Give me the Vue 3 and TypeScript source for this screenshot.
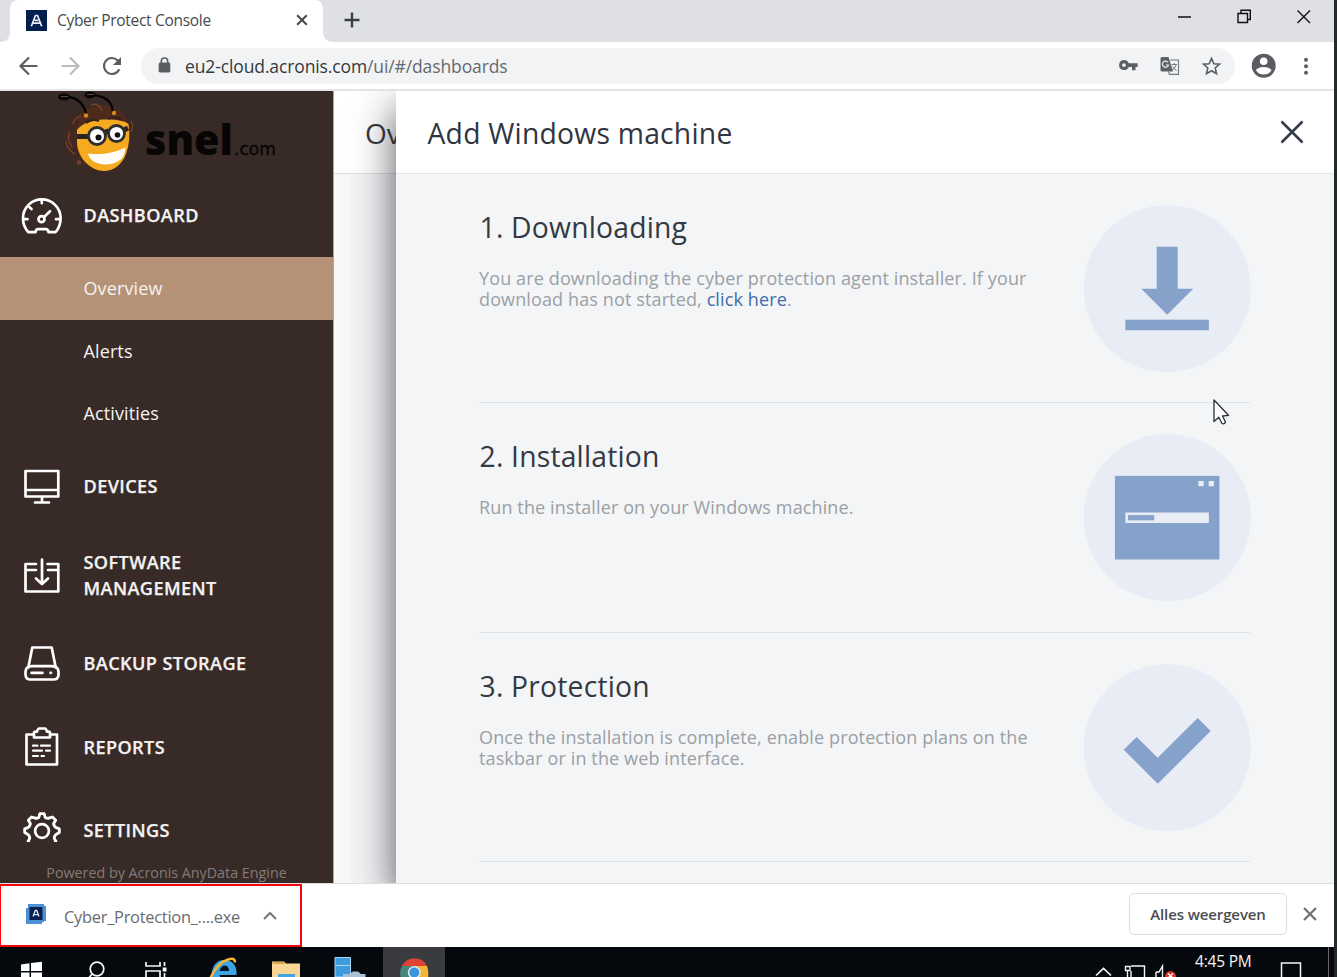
<script setup lang="ts">
interface NavItem {
  id: string
  label: string
  tall?: boolean
  children?: { label: string; active: boolean }[]
}

const navItems: NavItem[] = [
  {
    id: 'dashboard',
    label: 'DASHBOARD',
    children: [
      { label: 'Overview', active: true },
      { label: 'Alerts', active: false },
      { label: 'Activities', active: false },
    ],
  },
  { id: 'devices', label: 'DEVICES' },
  { id: 'software', label: 'SOFTWARE MANAGEMENT', tall: true },
  { id: 'backup', label: 'BACKUP STORAGE' },
  { id: 'reports', label: 'REPORTS' },
  { id: 'settings', label: 'SETTINGS' },
]

interface Step {
  id: string
  title: string
  lines: string[]
  link?: string
}

const steps: Step[] = [
  {
    id: 'download',
    title: '1. Downloading',
    lines: ['You are downloading the cyber protection agent installer. If your', 'download has not started, '],
    link: 'click here',
  },
  { id: 'install', title: '2. Installation', lines: ['Run the installer on your Windows machine.'] },
  {
    id: 'protect',
    title: '3. Protection',
    lines: ['Once the installation is complete, enable protection plans on the', 'taskbar or in the web interface.'],
  },
]
</script>

<template>
  <div class="screen">
    <div class="window">
      <div class="tabstrip">
        <svg class="tab-shape" width="334" height="42" viewBox="0 0 334 42">
          <path d="M0 42V42Q10 42 10 31V9Q10 0 19 0H314Q323 0 323 9V31Q323 42 334 42Z" fill="#fff" />
        </svg>
        <div class="tab">
          <svg width="21" height="21" viewBox="0 0 21 21">
            <rect width="21" height="21" fill="#031f4d" />
            <path d="M5.3 16.3L9.5 5.5H11.5L15.700 16.300M7 13.200H14M8.700 10.300H12.300" fill="none" stroke="#e8edf5" stroke-width="1.700" />
          </svg>
          <span class="tab-title">Cyber Protect Console</span>
          <svg class="tab-close" width="12" height="12" viewBox="0 0 12 12">
            <path d="M1.2 1.2L10.8 10.8M10.8 1.2L1.2 10.8" stroke="#45484c" stroke-width="2" />
          </svg>
        </div>
        <svg class="new-tab" width="16" height="16" viewBox="0 0 16 16">
          <path d="M8 .5V15.5M.5 8H15.5" stroke="#3c4043" stroke-width="2.4" />
        </svg>
        <svg class="controls" width="140" height="20" viewBox="1174 6 140 20">
          <g fill="none" stroke="#111" stroke-width="1.4">
            <path d="M1178 17H1191M1297.500 10.500L1310 23M1310 10.500L1297.500 23" />
            <path d="M1238 13.500H1247.500V22.500H1238ZM1241 13V10.300H1250.300V19.500H1248" />
          </g>
        </svg>
      </div>

      <div class="toolbar">
        <svg class="history" width="140" height="40" viewBox="0 46 140 40" fill="none" stroke-width="2.2">
          <path d="M37.5 66H21M29 57.5L20.5 66L29 74.5" stroke="#5b5e63" />
          <path d="M61.5 66H78M70 57.5L78.5 66L70 74.5" stroke="#b9bbbe" />
          <path d="M119.3 69.2A8 8 0 1 1 117.5 60.2L119.5 62.2" stroke="#5b5e63" />
          <path d="M121 57V65H113Z" fill="#5b5e63" />
        </svg>
        <div class="address">
          <svg class="lock" width="13" height="16" viewBox="0 0 13 16">
            <rect x=".7" y="5.5" width="11.6" height="10" rx="1.4" fill="#5a5d61" />
            <path d="M3.3 6V4.2A3.2 3.2 0 0 1 9.7 4.2V6" fill="none" stroke="#5a5d61" stroke-width="1.6" />
          </svg>
          <span class="url">eu2-cloud.acronis.com<span class="path">/ui/#/dashboards</span></span>
          <svg class="address-icons" width="110" height="24" viewBox="1115 54 110 24">
            <path fill="#5c5f63" fill-rule="evenodd" d="M1124 60A5 5 0 1 0 1128.700 67H1132V70.300H1135.500V67H1137.700V63.200H1128.700A5 5 0 0 0 1124 60ZM1124 63.200A1.900 1.900 0 1 1 1124 67A1.900 1.900 0 1 1 1124 63.200Z" />
            <path d="M1162 57H1168.500L1173 71.500H1162Q1160.500 71.500 1160.500 70V58.500Q1160.500 57 1162 57Z" fill="#5e6165" />
            <path d="M1170 60H1178.500V74.300H1169.500L1168.500 71.500" fill="none" stroke="#777a7e" stroke-width="1.2" />
            <path d="M1168 62.300A3.100 3.100 0 1 0 1168.500 65H1165.800" fill="none" stroke="#e8eaec" stroke-width="1.2" />
            <path d="M1171.500 64.500H1177M1174.200 63V64.500M1176 65Q1175 69 1172 70.500M1172.500 66.500L1176.500 71" fill="none" stroke="#777a7e" />
            <path d="M1211.500 58.400L1213.800 63.700L1219.500 64.200L1215.200 68L1216.500 73.700L1211.500 70.700L1206.500 73.700L1207.800 68L1203.500 64.200L1209.200 63.700Z" fill="none" stroke="#5b5e63" stroke-width="1.6" />
          </svg>
        </div>
        <svg class="menu-icons" width="70" height="30" viewBox="1245 51 70 30" fill="#595c61">
          <circle cx="1263.700" cy="65.800" r="12" />
          <circle cx="1263.700" cy="61.300" r="3.800" fill="#fff" />
          <path d="M1255.800 70Q1258.500 67 1263.700 67T1271.600 70Q1269 74.500 1263.700 74.500T1255.800 70Z" fill="#fff" />
          <circle cx="1306" cy="59.700" r="2" /><circle cx="1306" cy="66.200" r="2" /><circle cx="1306" cy="72.700" r="2" />
        </svg>
      </div>

      <div class="page">
        <aside class="sidebar">
          <div class="brand">
            <svg width="334" height="83" viewBox="0 91 334 83">
              <defs>
                <radialGradient id="fuzz">
                  <stop offset=".6" stop-color="#46271c" />
                  <stop offset="1" stop-color="#372a27" />
                </radialGradient>
              </defs>
              <ellipse cx="98" cy="138" rx="37" ry="36" fill="url(#fuzz)" />
              <path d="M77 132Q77 106 101 105Q125 105 130 128Z" fill="#4e2a1d" />
              <path d="M91 105Q99 102 102 111M70 132Q66 138 72 147M131 121Q134 126 131 132M81 116Q74 118 73 124M66 141Q67 150 75 154" fill="none" stroke="#744029" stroke-width="1.400" />
              <path d="M77 130Q85 120 104 119.500T128.500 124Q131 140 126 154C122 165 113 171 104 171C91 171 77 158 77 142Z" fill="#f6aa20" />
              <path d="M88 153.500Q109 156 125.500 147.500Q125 164.500 104 164.500Q90 163 88 153.500Z" fill="#fffdf8" />
              <path d="M77 136.500H91M104 134Q107 129 111 133M124 130L128 128" fill="none" stroke="#292523" stroke-width="5" />
              <circle cx="97" cy="136" r="8.500" fill="#fff" stroke="#302e2d" stroke-width="2.800" />
              <circle cx="116.500" cy="133.500" r="8" fill="#fff" stroke="#302e2d" stroke-width="2.800" />
              <circle cx="98.500" cy="137.500" r="3" fill="#10131b" />
              <circle cx="117.500" cy="135" r="2.800" fill="#10131b" />
              <path d="M86 123Q92 118 99 121M108 119Q115 115 122 120" fill="none" stroke="#32231e" stroke-width="2" />
              <path d="M64 97Q83 96 87 117M90 95Q112 95 113 113" fill="none" stroke="#030202" stroke-width="2.200" />
              <ellipse cx="64" cy="97" rx="6" ry="3.400" fill="#060404" />
              <ellipse cx="90" cy="95" rx="5.500" ry="3.300" fill="#060404" />
              <path d="M61 96.500H68M87 94.500H94" stroke="#55504e" stroke-width="1.200" />
              <circle cx="86" cy="115.500" r="2.200" fill="#d58a19" /><circle cx="114" cy="113" r="2.200" fill="#d58a19" />
              <circle cx="79" cy="162.500" r="2.300" fill="#73452f" />
              <text x="145" y="154.700" class="snel" textLength="88" lengthAdjust="spacingAndGlyphs">snel</text>
              <text x="234" y="155" class="dotcom" textLength="42" lengthAdjust="spacingAndGlyphs">.com</text>
            </svg>
          </div>
          <nav>
            <template v-for="item in navItems" :key="item.id">
              <div class="nav-item" :class="[item.id, { tall: item.tall }]">
                <svg class="nav-icon" width="44" height="44" viewBox="0 0 44 44" fill="none" stroke="#fff" stroke-width="2.700" stroke-linejoin="round" stroke-linecap="round">
                  <template v-if="item.id === 'dashboard'">
                    <path d="M8.500 39.200Q3 33.500 3 25.200A18.800 18.800 0 0 1 40.600 25.200Q40.600 33.500 35.500 39.200H28.500Q28 36.200 26 36.200H18Q16 36.200 15.500 39.200Z" />
                    <circle cx="21.500" cy="26.200" r="3" />
                    <path d="M24.300 23.700L30 18.200M21.800 7.700V10.200M9.500 14.200L11.500 16M4 26.200H7.500M36 26.200H39.500" />
                  </template>
                  <template v-else-if="item.id === 'devices'">
                    <path d="M5.500 7H38.300V32.500H5.500ZM5.500 26H38.300M22 32.500V38M15 38.500H29" />
                  </template>
                  <template v-else-if="item.id === 'software'">
                    <path d="M16 13H5.500V40.500H38.300V13H27.500M6 19H16M28 19H38M22 8.500V32.500M16 27.500L22 33L28 27.500" />
                  </template>
                  <template v-else-if="item.id === 'backup'">
                    <path d="M12.300 6.500H31.700L35.500 25.500Q38.500 27.500 38.500 31V33.500Q38.500 38.500 33.500 38.500H10.500Q5.500 38.500 5.500 33.500V31Q5.500 27.500 8.500 25.500ZM8 26.500Q10 25.200 12 25.200H32Q34 25.200 36 26.500M11.500 31.800H22.500M30.500 31.800H31" />
                  </template>
                  <template v-else-if="item.id === 'reports'">
                    <path d="M13 9.500H6.500V39.500H37V9.500H31M14 12.500V8Q14 6.700 15.500 6.700H17Q18 3.500 19 3.500H25Q26 3.500 27 6.700H28.500Q30 6.700 30 8V12.500Z" />
                    <path d="M13 20.700H17.500M21 20.700H30M13 25.700H22M26 25.700H30M13 31H18M21.500 31H24" stroke-width="2.200" />
                  </template>
                  <template v-else>
                    <circle cx="22" cy="23" r="6.900" />
                    <path transform="translate(22 23) scale(1.050) translate(-22 -21)" d="M19 8L20 4.500H24L25 8Q27 9.500 29 8.500L32 7.700L35 10.700L33 14Q33.500 16.500 35 17.500L38.500 19V22.500L35 24.500Q33.500 26 33.700 28L35.300 31L32 34.300L28.500 32.700L25.500 34L24 37.500H20L18.500 34L15.500 32.700L12 34.300L8.700 31L10.300 28Q10.500 26 9 24.500L5.500 22.500V19L9 17.500Q10.500 16.500 11 14L9 10.700L12 7.700L15 8.500Q17 9.500 19 8Z" />
                  </template>
                </svg>
                <span>{{ item.label }}</span>
              </div>
              <div v-for="child in item.children" :key="child.label" class="sub-item" :class="{ active: child.active }">{{ child.label }}</div>
            </template>
          </nav>
          <div class="powered">Powered by Acronis AnyData Engine</div>
        </aside>

        <div class="behind">
          <div class="behind-head"><span>Overview</span></div>
        </div>

        <main class="panel">
          <header>
            <h1>Add Windows machine</h1>
            <svg width="24" height="24" viewBox="0 0 24 24">
              <path d="M1.500 1.500L22.500 22.500M22.500 1.500L1.500 22.500" stroke="#363b4c" stroke-width="2.600" />
            </svg>
          </header>
          <div class="steps">
            <section v-for="step in steps" :key="step.id" class="step">
              <div class="step-copy">
                <h2>{{ step.title }}</h2>
                <p>
                  <span v-for="(line, i) in step.lines" :key="line" class="line">{{ line }}<template v-if="step.link && i === step.lines.length - 1"><a>{{ step.link }}</a>.</template></span>
                </p>
              </div>
              <svg class="step-art" width="168" height="168" viewBox="0 0 168 168" fill="#86a1ca">
                <g transform="translate(.7 .2)">
                  <circle cx="83.500" cy="83.500" r="83.500" fill="#e7ecf5" />
                  <template v-if="step.id === 'download'">
                    <path d="M73 41.500H94V83.500H109.500L83.500 109.500L57.500 83.500H73Z" />
                    <rect x="41.700" y="114.500" width="83.500" height="10.500" />
                  </template>
                  <template v-else-if="step.id === 'install'">
                    <rect x="31.200" y="41.700" width="104.500" height="83.600" />
                    <path d="M114.700 46.900H120V52.100H114.700ZM125 46.900H130.200V52.100H125ZM41.700 78.300H125.200V88.700H41.700Z" fill="#e7ecf5" />
                    <rect x="44.300" y="80.900" width="26.200" height="5.200" />
                  </template>
                  <path v-else d="M40 85.500L53 72.700L74 93.500L114 53.800L127 66.800L74 119.500Z" />
                </g>
              </svg>
            </section>
          </div>
          <svg class="pointer" width="17" height="27" viewBox="0 0 17 27">
            <path d="M1 1V22.500L5.800 18.200L9 24.500Q11.500 25.500 12.500 23L9.500 17L15.500 16.300Z" fill="#fff" stroke="#2a2d3a" stroke-width="1.300" stroke-linejoin="round" />
          </svg>
        </main>
      </div>

      <div class="downloads">
        <div class="download-item">
          <svg class="exe-icon" width="20" height="20" viewBox="0 0 20 20">
            <path d="M2 0H18V2H20V17H18V18H16V20H0V4H2Z" fill="#4c8fd6" />
            <rect x="3.500" y="3" width="13" height="13" fill="#07204f" />
            <path d="M7 12.500L9.300 6.500H10.700L13 12.500M8 10.700H12" fill="none" stroke="#dfe8f5" stroke-width="1.300" />
          </svg>
          <span>Cyber_Protection_....exe</span>
          <svg class="chevron" width="14" height="9" viewBox="0 0 14 9"><path d="M1 8L7 2L13 8" fill="none" stroke="#75777a" stroke-width="2" /></svg>
        </div>
        <button type="button">Alles weergeven</button>
        <svg class="bar-close" width="14" height="14" viewBox="0 0 14 14"><path d="M1 1L13 13M13 1L1 13" stroke="#707377" stroke-width="2.300" /></svg>
      </div>

      <div class="taskbar">
        <svg width="1334" height="30" viewBox="0 947 1334 30">
          <rect x="383" y="947" width="62" height="30" fill="#393b3f" />
          <path d="M21 964.500L29.500 963.300V971H21ZM31 963.100L42 961.800V971H31ZM21 972.500H29.500V980H21ZM31 972.500H42V982H31Z" fill="#fff" />
          <g fill="none" stroke="#f4f4f4" stroke-width="1.700">
            <circle cx="97" cy="969" r="6.800" /><path d="M92.500 973.500L88 979" />
            <path d="M146 962V966H160V962M146 980V971H160V980M164.500 962V966M164.500 973V980" />
            <path d="M1096 975.500L1103.500 968.500L1111 975.500" />
            <path d="M1131 966H1144.500V980M1131 971V980M1125.500 966.500H1130V970.500H1125.500ZM1127.500 971V977" stroke-width="1.400" />
            <path d="M1156 972H1159L1162.500 966V980M1156 972V980" stroke-width="1.400" />
            <path d="M1281.500 980V963H1300.500V980" stroke-width="1.500" />
          </g>
          <rect x="162.700" y="967.500" width="3.800" height="4" fill="#fff" />
          <circle cx="1170.500" cy="976.500" r="5.500" fill="#dc3429" />
          <path d="M1168 973.500L1173 978M1173 973.500L1168 978" stroke="#fff" stroke-width="1.300" />
          <path d="M1328.500 947V977" stroke="#6a6567" />
          <path d="M211 980C211 967 216 960 224 960C234 960 237 967 236.500 975H219.500Q221 980 226 983L215 985Z" fill="#3da4e8" />
          <path d="M219.500 971Q221 965.500 225 965.500Q229 966 229 971Z" fill="#07131f" />
          <path d="M210 979Q217 963 228 959.500Q235 957 235 962.500" fill="none" stroke="#f5b534" stroke-width="2.500" />
          <path d="M272 977V961.500H284L286 963.500H300V977Z" fill="#f8d796" />
          <path d="M272.500 962H284L285 964H272.500Z" fill="#d9a942" />
          <path d="M278 977V974H295V977Z" fill="#43a4e4" />
          <path d="M335 957.500H350.500V977H335Z" fill="#3d9cdd" stroke="#a7d9f6" /><path d="M336 965.500H350" stroke="#a7d9f6" />
          <path d="M343 977V974H349L353 971.500H358L361 974H365.500V977Z" fill="#a9bfd2" />
          <path d="M402 966A14 14 0 0 1 427 966H414Z" fill="#dd4435" />
          <path d="M402 966A14 14 0 0 0 401.500 979H414V966Z" fill="#46877b" />
          <path d="M414 966H427Q429 971 428 979H414Z" fill="#f3b638" />
          <circle cx="414.300" cy="972.500" r="6.500" fill="#dceaf5" /><circle cx="414.300" cy="972.500" r="5" fill="#3995dc" />
        </svg>
        <span class="clock">4:45 PM</span>
      </div>
    </div>
  </div>
</template>

<style>
body { margin: 0; overflow: hidden; }
</style>

<style scoped>
.screen { width: 1337px; height: 977px; box-sizing: border-box; overflow: hidden; background: #24292a; font-family: "Open Sans", "Noto Sans", sans-serif; }
.window { width: 1334px; height: 977px; display: flex; flex-direction: column; background: #fff; }
svg { display: block; flex: none; }
.tabstrip { position: relative; height: 42px; flex: none; background: #dee0e4; display: flex; align-items: center; }
.tab-shape { position: absolute; left: 0; top: 0; }
.tab { position: relative; width: 308px; box-sizing: border-box; padding-left: 26px; padding-bottom: 2px; display: flex; align-items: center; height: 42px; }
.tab-title { margin-left: 10px; font-size: 15.5px; letter-spacing: -0.3px; color: #46494d; white-space: nowrap; }
.tab-close { margin-left: auto; }
.new-tab { margin-left: 36px; margin-top: -2px; }
.controls { margin-left: auto; margin-right: 20px; margin-top: -10px; }
.toolbar { height: 49px; box-sizing: border-box; flex: none; border-bottom: 2px solid #e2e3e5; display: flex; align-items: center; }
.address { width: 1094px; height: 36px; margin-left: 1px; border-radius: 18px; background: #f1f3f4; display: flex; align-items: center; padding-left: 17px; padding-right: 10px; box-sizing: border-box; }
.lock { margin-top: -2px; }
.url { margin-left: 14px; font-size: 17.5px; letter-spacing: -0.12px; color: #36393d; white-space: nowrap; }
.path { color: #66696d; }
.address-icons { margin-left: auto; }
.menu-icons { margin-left: 10px; }
.page { height: 792px; flex: none; display: flex; overflow: hidden; }
.sidebar { width: 333px; flex: none; border-right: 1px solid #aaa3a1; background: #372a27; display: flex; flex-direction: column; overflow: hidden; color: #f4f3f2; }
.brand { height: 83px; flex: none; }
.snel { font: 800 42px "Open Sans", sans-serif; fill: #080505; }
.dotcom { font: 400 17px "DejaVu Sans", sans-serif; fill: #080505; stroke: #080505; stroke-width: .3px; }
nav { flex: 1; min-height: 0; overflow: hidden; }
.nav-item { height: 83.4px; box-sizing: border-box; display: flex; align-items: center; padding-left: 20px; padding-right: 60px; font-size: 18.1px; letter-spacing: 0.4px; line-height: 26px; font-weight: 600; -webkit-text-stroke: 0.25px #f4f3f2; }
.nav-item.dashboard, .nav-item.devices { padding-bottom: 2px; }
.nav-item.tall { height: 93px; }
.nav-item.tall .nav-icon { margin-top: -3px; }
.nav-item.backup, .nav-item.settings { padding-top: 1px; }
.nav-item.reports { padding-top: 2px; }
.nav-item span { margin-left: 19.5px; }
.sub-item { height: 62.5px; line-height: 62px; padding-left: 83.5px; font-size: 18px; letter-spacing: 0.12px; }
.sub-item.active { background: #b59275; }
.powered { height: 41px; flex: none; box-sizing: border-box; padding-top: 21px; text-align: center; font-size: 14.3px; line-height: 20px; color: #847b78; }
.behind { width: 62px; flex: none; background: linear-gradient(90deg, #f8f8f8 0 16px, #f3f4f5 16px); overflow: hidden; }
.behind-head { height: 82px; border-bottom: 1px solid #dddfe1; background: #fff; font-size: 28px; line-height: 84px; padding-left: 31px; color: #353942; }
.panel { position: relative; flex: 1; background: #f3f5f6; box-shadow: 0 18px 38px rgba(18, 20, 30, .72); display: flex; flex-direction: column; }
header { height: 82px; flex: none; box-sizing: content-box; border-bottom: 1px solid #e0e6ed; background: #fff; display: flex; align-items: center; justify-content: space-between; padding: 0 30px 0 31.5px; }
h1, h2, p { margin: 0; font-weight: 400; }
h1 { font-size: 28.3px; line-height: 40px; margin-top: 2px; letter-spacing: 0.22px; color: #303541; }
.steps { padding: 0 83px 0 83px; }
.step { height: 229.4px; box-sizing: border-box; border-bottom: 1px solid #dfe2e5; margin-right: 1px; display: flex; justify-content: space-between; }
.step-copy { padding-top: 33px; }
h2 { font-size: 28.3px; line-height: 40px; letter-spacing: 0.2px; padding-left: 0.5px; color: #343943; }
p { display: flex; flex-direction: column; margin-top: 21px; font-size: 18px; line-height: 21px; letter-spacing: 0.125px; color: #9b9fa6; white-space: pre; }
.line { display: block; }
a { color: #416cad; }
.step-art { margin-top: 31px; margin-right: -1px; }
.pointer { position: absolute; left: 817px; top: 308px; }
.downloads { height: 64px; box-sizing: border-box; flex: none; border-top: 1px solid #dcdde0; background: #fff; display: flex; align-items: center; }
.download-item { width: 302px; height: 63px; box-sizing: border-box; border: 2px solid #f50509; border-left-width: 1px; display: flex; align-items: center; padding-left: 25px; }
.exe-icon { margin-top: -3px; }
.download-item span { margin-left: 18px; padding-top: 2px; font-size: 16.4px; letter-spacing: -0.26px; color: #6a6c70; }
.chevron { margin-left: 23px; }
button { margin-left: auto; margin-bottom: 3px; width: 158px; height: 42px; border: 1.5px solid #dcdee1; border-radius: 5px; background: #fff; padding: 0; color: #4b4e53; font: 600 15px "Open Sans", sans-serif; letter-spacing: -0.12px; white-space: nowrap; }
.bar-close { margin-left: 16px; margin-right: 17px; margin-bottom: 3px; }
.taskbar { position: relative; height: 30px; flex: none; background: #05090e; overflow: hidden; }
.clock { position: absolute; left: 1195px; top: 4px; font-size: 15.5px; line-height: 20px; letter-spacing: -0.2px; color: #f5f5f5; white-space: nowrap; }
</style>
